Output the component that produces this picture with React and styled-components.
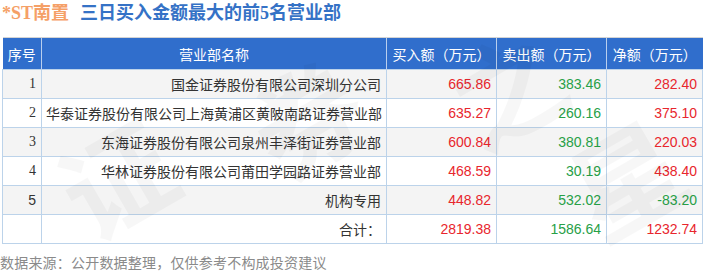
import React from "react";
import styled, { createGlobalStyle } from "styled-components";

const GlobalStyle = createGlobalStyle`
  html, body {
    margin: 0;
    padding: 0;
    background: #ffffff;
  }
  body {
    font-family: "Liberation Sans", "Noto Sans CJK SC", sans-serif;
  }
`;

const Page = styled.div`
  position: relative;
  width: 703px;
  height: 274px;
  overflow: hidden;
  background: #fff;
`;

const Title = styled.div`
  display: flex;
  align-items: center;
  gap: 11px;
  height: 26px;
  padding: 0 0 0 2px;
  font-family: "Liberation Serif", "Noto Sans CJK SC", serif;
  font-size: 18px;
  font-weight: bold;
  line-height: 26px;
`;

const Stock = styled.span`
  color: #f5a067;
`;

const Heading = styled.span`
  color: #3572c6;
`;

const Table = styled.table`
  margin: 11px 0 0 2px;
  width: 700px;
  border-collapse: collapse;
  table-layout: fixed;
  font-size: 14px;
  color: #333;
`;

const HeadRow = styled.tr`
  height: 32px;
  background: #306ecc;
`;

const Th = styled.th`
  padding: 0;
  color: #fff;
  font-weight: normal;
  font-family: "Noto Sans CJK SC", sans-serif;
  font-size: 14px;
  text-align: center;
  border-top: 1px solid #d4d4d4;
  border-left: 1px solid #b9cfee;
  &:first-child {
    border-left: none;
  }
`;

const Row = styled.tr`
  height: 29px;
  background: ${(p) => (p.$shade ? "#f4f4f4" : "#ffffff")};
`;

const Td = styled.td`
  padding: 0 5px 0 4px;
  border: 1px solid #bcd3ea;
  text-align: right;
  white-space: nowrap;
  font-family: ${(p) =>
    p.$serif
      ? `"Liberation Serif", "Noto Sans CJK SC", serif`
      : `"Liberation Sans", "Noto Sans CJK SC", sans-serif`};
  color: ${(p) => p.$color || "#333"};
`;

const Footer = styled.div`
  margin-top: 9px;
  font-family: "Noto Sans CJK SC", sans-serif;
  font-size: 14px;
  letter-spacing: 0.2px;
  color: #8a8a8a;
  line-height: 18px;
`;

// faint diagonal "证券之星" watermark lying over the table
const Watermark = styled.div`
  position: absolute;
  left: ${(p) => p.$x}px;
  top: ${(p) => p.$y}px;
  font-family: "Noto Sans CJK SC", sans-serif;
  font-size: 110px;
  font-weight: bold;
  color: rgba(0, 0, 0, 0.03);
  transform: rotate(-30deg);
  pointer-events: none;
  line-height: 1;
`;

const RED = "#e8262d";
const GREEN = "#27a047";

const rows = [
  ["1", "国金证券股份有限公司深圳分公司", "665.86", "383.46", "282.40"],
  ["2", "华泰证券股份有限公司上海黄浦区黄陂南路证券营业部", "635.27", "260.16", "375.10"],
  ["3", "东海证券股份有限公司泉州丰泽街证券营业部", "600.84", "380.81", "220.03"],
  ["4", "华林证券股份有限公司莆田学园路证券营业部", "468.59", "30.19", "438.40"],
  ["5", "机构专用", "448.82", "532.02", "-83.20"],
];

export default function App() {
  return (
    <Page>
      <GlobalStyle />
      <Title>
        <Stock>*ST南置</Stock>
        <Heading>三日买入金额最大的前5名营业部</Heading>
      </Title>
      <Table>
        <colgroup>
          <col style={{ width: 39 }} />
          <col style={{ width: 345 }} />
          <col style={{ width: 110 }} />
          <col style={{ width: 110 }} />
          <col style={{ width: 96 }} />
        </colgroup>
        <thead>
          <HeadRow>
            <Th>序号</Th>
            <Th>营业部名称</Th>
            <Th>买入额（万元）</Th>
            <Th>卖出额（万元）</Th>
            <Th>净额（万元）</Th>
          </HeadRow>
        </thead>
        <tbody>
          {rows.map((r, i) => (
            <Row key={r[0]} $shade={i % 2 === 0}>
              <Td $serif={i < 4}>{r[0]}</Td>
              <Td>{r[1]}</Td>
              <Td $color={RED}>{r[2]}</Td>
              <Td $color={GREEN}>{r[3]}</Td>
              <Td $color={r[4].startsWith("-") ? GREEN : RED}>{r[4]}</Td>
            </Row>
          ))}
          <Row>
            <Td></Td>
            <Td>合计：</Td>
            <Td $color={RED}>2819.38</Td>
            <Td $color={GREEN}>1586.64</Td>
            <Td $color={RED}>1232.74</Td>
          </Row>
        </tbody>
      </Table>
      <Footer>数据来源：公开数据整理，仅供参考不构成投资建议</Footer>
      <Watermark $x={60} $y={120}>证</Watermark>
      <Watermark $x={250} $y={60}>券</Watermark>
      <Watermark $x={450} $y={30}>之</Watermark>
      <Watermark $x={570} $y={120}>星</Watermark>
    </Page>
  );
}
